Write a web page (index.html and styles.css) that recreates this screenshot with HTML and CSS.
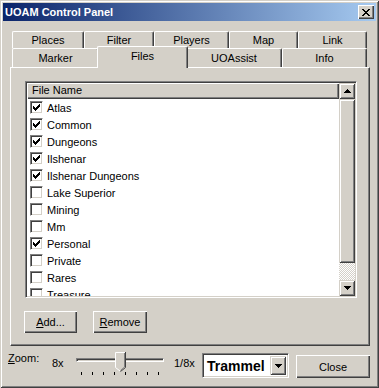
FILE: index.html
```html
<!DOCTYPE html>
<html lang="en">
<head>
    <meta charset="UTF-8">
    <title>UOAM Control Panel</title>
    <link rel="stylesheet" href="styles.css">
</head>
<body>

    <div class="window">
        <div class="titlebar">
            <span class="title">UOAM Control Panel</span>
            <div class="title-close">
                <svg width="8" height="7" viewBox="0 0 8 7" shape-rendering="crispEdges">
                    <path d="M0 0h2v1h1v1h2v-1h1v-1h2v1h-1v1h-1v1h-1v1h1v1h1v1h1v1h-2v-1h-1v-1h-2v1h-1v1h-2v-1h1v-1h1v-1h1v-1h-1v-1h-1v-1h-1z" fill="#000"/>
                </svg>
            </div>
        </div>

        <div class="tabs">
            <div class="tab-row back">
                <div class="tab w72">Places</div>
                <div class="tab w70">Filter</div>
                <div class="tab w75">Players</div>
                <div class="tab w69">Map</div>
                <div class="tab w69">Link</div>
            </div>
            <div class="tab-row front">
                <div class="tab w87">Marker</div>
                <div class="tab w87 selected">Files</div>
                <div class="tab w96">UOAssist</div>
                <div class="tab w85">Info</div>
            </div>
        </div>

        <div class="panel">
            <div class="listview">
                <div class="list-main">
                    <div class="list-header">File Name</div>
                    <div class="list-items">
                        <div class="item"><span class="check"><svg width="7" height="7" viewBox="0 0 7 7" shape-rendering="crispEdges"><path d="M6 0h1v3h-1v1h-1v1h-1v1h-1v1h-1v-1h-1v-1h-1v-3h1v1h1v1h1v-1h1v-1h1z" fill="#000"/></svg></span>Atlas</div>
                        <div class="item"><span class="check"><svg width="7" height="7" viewBox="0 0 7 7" shape-rendering="crispEdges"><path d="M6 0h1v3h-1v1h-1v1h-1v1h-1v1h-1v-1h-1v-1h-1v-3h1v1h1v1h1v-1h1v-1h1z" fill="#000"/></svg></span>Common</div>
                        <div class="item"><span class="check"><svg width="7" height="7" viewBox="0 0 7 7" shape-rendering="crispEdges"><path d="M6 0h1v3h-1v1h-1v1h-1v1h-1v1h-1v-1h-1v-1h-1v-3h1v1h1v1h1v-1h1v-1h1z" fill="#000"/></svg></span>Dungeons</div>
                        <div class="item"><span class="check"><svg width="7" height="7" viewBox="0 0 7 7" shape-rendering="crispEdges"><path d="M6 0h1v3h-1v1h-1v1h-1v1h-1v1h-1v-1h-1v-1h-1v-3h1v1h1v1h1v-1h1v-1h1z" fill="#000"/></svg></span>Ilshenar</div>
                        <div class="item"><span class="check"><svg width="7" height="7" viewBox="0 0 7 7" shape-rendering="crispEdges"><path d="M6 0h1v3h-1v1h-1v1h-1v1h-1v1h-1v-1h-1v-1h-1v-3h1v1h1v1h1v-1h1v-1h1z" fill="#000"/></svg></span>Ilshenar Dungeons</div>
                        <div class="item"><span class="check"></span>Lake Superior</div>
                        <div class="item"><span class="check"></span>Mining</div>
                        <div class="item"><span class="check"></span>Mm</div>
                        <div class="item"><span class="check"><svg width="7" height="7" viewBox="0 0 7 7" shape-rendering="crispEdges"><path d="M6 0h1v3h-1v1h-1v1h-1v1h-1v1h-1v-1h-1v-1h-1v-3h1v1h1v1h1v-1h1v-1h1z" fill="#000"/></svg></span>Personal</div>
                        <div class="item"><span class="check"></span>Private</div>
                        <div class="item"><span class="check"></span>Rares</div>
                        <div class="item"><span class="check"></span>Treasure</div>
                    </div>
                </div>
                <div class="scrollbar">
                    <div class="sb-btn">
                        <svg width="7" height="4" viewBox="0 0 7 4" shape-rendering="crispEdges"><path d="M3 0h1v1h1v1h1v1h1v1h-7v-1h1v-1h1v-1h1z" fill="#000"/></svg>
                    </div>
                    <div class="sb-thumb"></div>
                    <div class="sb-track"></div>
                    <div class="sb-btn">
                        <svg width="7" height="4" viewBox="0 0 7 4" shape-rendering="crispEdges"><path d="M0 0h7v1h-1v1h-1v1h-1v1h-1v-1h-1v-1h-1v-1h-1z" fill="#000"/></svg>
                    </div>
                </div>
            </div>
            <div class="panel-buttons">
                <div class="btn btn-add"><span><u>A</u>dd...</span></div>
                <div class="btn btn-remove"><span><u>R</u>emove</span></div>
            </div>
        </div>

        <div class="bottom-bar">
            <span class="zoom-label"><u>Z</u>oom:</span>
            <span class="zoom-min">8x</span>
            <div class="slider">
                <div class="slider-track"></div>
                <div class="ticks">
                    <span></span><span></span><span></span><span></span>
                    <span></span><span></span><span></span><span></span>
                </div>
                <svg class="slider-thumb" width="11" height="20" viewBox="0 0 11 20">
                    <path d="M0.5 15.5V0.5H10.5V15.5L5.5 19.5z" fill="#d4d0c8"/>
                    <path d="M0.5 15.5V0.5H10" fill="none" stroke="#fff"/>
                    <path d="M10.5 0V15.5L5.5 19.5" fill="none" stroke="#404040"/>
                    <path d="M9.5 1V15L5.5 18.5" fill="none" stroke="#808080"/>
                    <path d="M0.5 15.5L5 19" fill="none" stroke="#fff"/>
                </svg>
            </div>
            <span class="zoom-max">1/8x</span>
            <div class="combo">
                <span class="combo-text">Trammel</span>
                <div class="combo-btn">
                    <svg width="7" height="4" viewBox="0 0 7 4" shape-rendering="crispEdges"><path d="M0 0h7v1h-1v1h-1v1h-1v1h-1v-1h-1v-1h-1v-1h-1z" fill="#000"/></svg>
                </div>
            </div>
            <div class="btn btn-close">Close</div>
        </div>
    </div>

</body>
</html>
```

FILE: styles.css
```css
body {
    margin: 0;
    font-family: "Liberation Sans", Arial, sans-serif;
    font-size: 11px;
    color: #000;
    background-color: #d4d0c8;
}
.window {
    width: 379px;
    height: 388px;
    box-sizing: border-box;
    padding: 3px;
    background-color: #d4d0c8;
    box-shadow: inset 1px 1px #d4d0c8, inset -1px -1px #404040,
                inset 2px 2px #fff, inset -2px -2px #808080;
    overflow: hidden;
}
.titlebar {
    height: 18px;
    display: flex;
    align-items: center;
    justify-content: space-between;
    padding: 0 2px;
    background: linear-gradient(to right, #0a246a, #a6caf0);
}
.title {
    color: #fff;
    font-weight: bold;
    font-size: 11px;
}
.title-close {
    width: 16px;
    height: 14px;
    box-sizing: border-box;
    display: flex;
    align-items: center;
    justify-content: center;
    background-color: #d4d0c8;
    box-shadow: inset 1px 1px #fff, inset -1px -1px #404040, inset -2px -2px #808080;
}

/* tabs */
.tabs {
    margin: 10px 0 0 9px;
    width: 355px;
}
.tab-row {
    display: flex;
}
.tab-row.back {
    height: 17px;
}
.tab-row.front {
    height: 19px;
    align-items: flex-end;
}
.tab {
    box-sizing: border-box;
    height: 100%;
    border-top: 1px solid #fff;
    border-left: 1px solid #fff;
    border-right: 1px solid #404040;
    border-radius: 2px 2px 0 0;
    box-shadow: inset -1px 0 #808080;
    text-align: center;
    line-height: 17px;
    background-color: #d4d0c8;
}
.tab-row.front .tab {
    line-height: 19px;
}
.tab.selected {
    position: relative;
    z-index: 1;
    height: 22px;
    margin: 0 -2px -1px -2px;
    line-height: 19px;
}
.w69 { width: 69px; }
.w70 { width: 70px; }
.w72 { width: 72px; }
.w75 { width: 75px; }
.w85 { width: 85px; }
.w87 { width: 87px; }
.w87.selected { width: 91px; }
.w96 { width: 96px; }

/* panel */
.panel {
    margin-left: 7px;
    width: 360px;
    height: 279px;
    box-sizing: border-box;
    padding: 13px 0 0 14px;
    border-top: 1px solid #fff;
    border-left: 1px solid #fff;
    border-right: 1px solid #404040;
    border-bottom: 1px solid #404040;
    box-shadow: inset -1px -1px #808080;
}
.listview {
    width: 332px;
    height: 217px;
    box-sizing: border-box;
    display: flex;
    background-color: #fff;
    border-top: 1px solid #808080;
    border-left: 1px solid #808080;
    border-right: 1px solid #fff;
    border-bottom: 1px solid #fff;
    box-shadow: inset 1px 1px #404040, inset -1px -1px #d4d0c8;
    padding: 1px;
    overflow: hidden;
}
.list-main {
    flex: 1;
    overflow: hidden;
}
.list-header {
    height: 16px;
    box-sizing: border-box;
    padding-left: 5px;
    line-height: 15px;
    background-color: #d4d0c8;
    box-shadow: inset 1px 1px #fff, inset -1px -1px #404040, inset -2px -2px #808080;
}
.item {
    height: 17px;
    display: flex;
    align-items: center;
    padding-left: 3px;
    white-space: nowrap;
}
.check {
    width: 13px;
    height: 13px;
    box-sizing: border-box;
    display: flex;
    align-items: center;
    justify-content: center;
    margin-right: 4px;
    background-color: #fff;
    border-top: 1px solid #808080;
    border-left: 1px solid #808080;
    border-right: 1px solid #fff;
    border-bottom: 1px solid #fff;
    box-shadow: inset 1px 1px #404040, inset -1px -1px #d4d0c8;
}

/* scrollbar */
.scrollbar {
    width: 16px;
    display: flex;
    flex-direction: column;
}
.sb-btn, .sb-thumb {
    background-color: #d4d0c8;
    box-shadow: inset 1px 1px #d4d0c8, inset -1px -1px #404040,
                inset 2px 2px #fff, inset -2px -2px #808080;
}
.sb-btn {
    height: 16px;
    flex-shrink: 0;
    display: flex;
    align-items: center;
    justify-content: center;
}
.sb-thumb {
    height: 164px;
    flex-shrink: 0;
}
.sb-track {
    flex: 1;
    background-color: #fff;
    background-image: repeating-conic-gradient(#d4d0c8 0 25%, #fff 0 50%);
    background-size: 2px 2px;
}

/* buttons */
.btn {
    box-sizing: border-box;
    display: flex;
    align-items: center;
    justify-content: center;
    background-color: #d4d0c8;
    box-shadow: inset 1px 1px #fff, inset -1px -1px #404040, inset -2px -2px #808080;
}
.panel-buttons {
    display: flex;
    margin: 13px 0 0 -1px;
}
.btn-add {
    width: 53px;
    height: 22px;
}
.btn-remove {
    width: 54px;
    height: 22px;
    margin-left: 16px;
}

/* bottom bar */
.bottom-bar {
    display: flex;
    align-items: flex-start;
    margin-top: 6px;
    height: 27px;
}
.zoom-label {
    margin-left: 5px;
    width: 44px;
    line-height: 13px;
}
.zoom-min, .zoom-max {
    line-height: 13px;
    margin-top: 5px;
}
.zoom-min {
    width: 24px;
}
.zoom-max {
    width: 28px;
}
.slider {
    position: relative;
    width: 88px;
    height: 26px;
    margin-right: 10px;
}
.slider-track {
    margin-top: 6px;
    height: 4px;
    box-sizing: border-box;
    border-top: 1px solid #808080;
    border-left: 1px solid #808080;
    border-right: 1px solid #fff;
    border-bottom: 1px solid #fff;
    box-shadow: inset 1px 1px #404040, inset -1px -1px #d4d0c8;
}
.ticks {
    display: flex;
    justify-content: space-between;
    margin: 10px 5px 0 5px;
}
.ticks span {
    width: 1px;
    height: 3px;
    background-color: #000;
}
.slider-thumb {
    position: absolute;
    left: 39px;
    top: 0;
}
.combo {
    width: 87px;
    height: 25px;
    margin-top: 1px;
    box-sizing: border-box;
    display: flex;
    align-items: center;
    justify-content: space-between;
    padding: 2px;
    background-color: #fff;
    border-top: 1px solid #808080;
    border-left: 1px solid #808080;
    border-right: 1px solid #fff;
    border-bottom: 1px solid #fff;
    box-shadow: inset 1px 1px #404040, inset -1px -1px #d4d0c8;
}
.combo-text {
    font-weight: bold;
    font-size: 14px;
    padding-left: 2px;
}
.combo-btn {
    width: 16px;
    height: 19px;
    display: flex;
    align-items: center;
    justify-content: center;
    background-color: #d4d0c8;
    box-shadow: inset 1px 1px #d4d0c8, inset -1px -1px #404040,
                inset 2px 2px #fff, inset -2px -2px #808080;
}
.btn-close {
    width: 74px;
    height: 23px;
    margin: 3px 0 0 7px;
}
```
